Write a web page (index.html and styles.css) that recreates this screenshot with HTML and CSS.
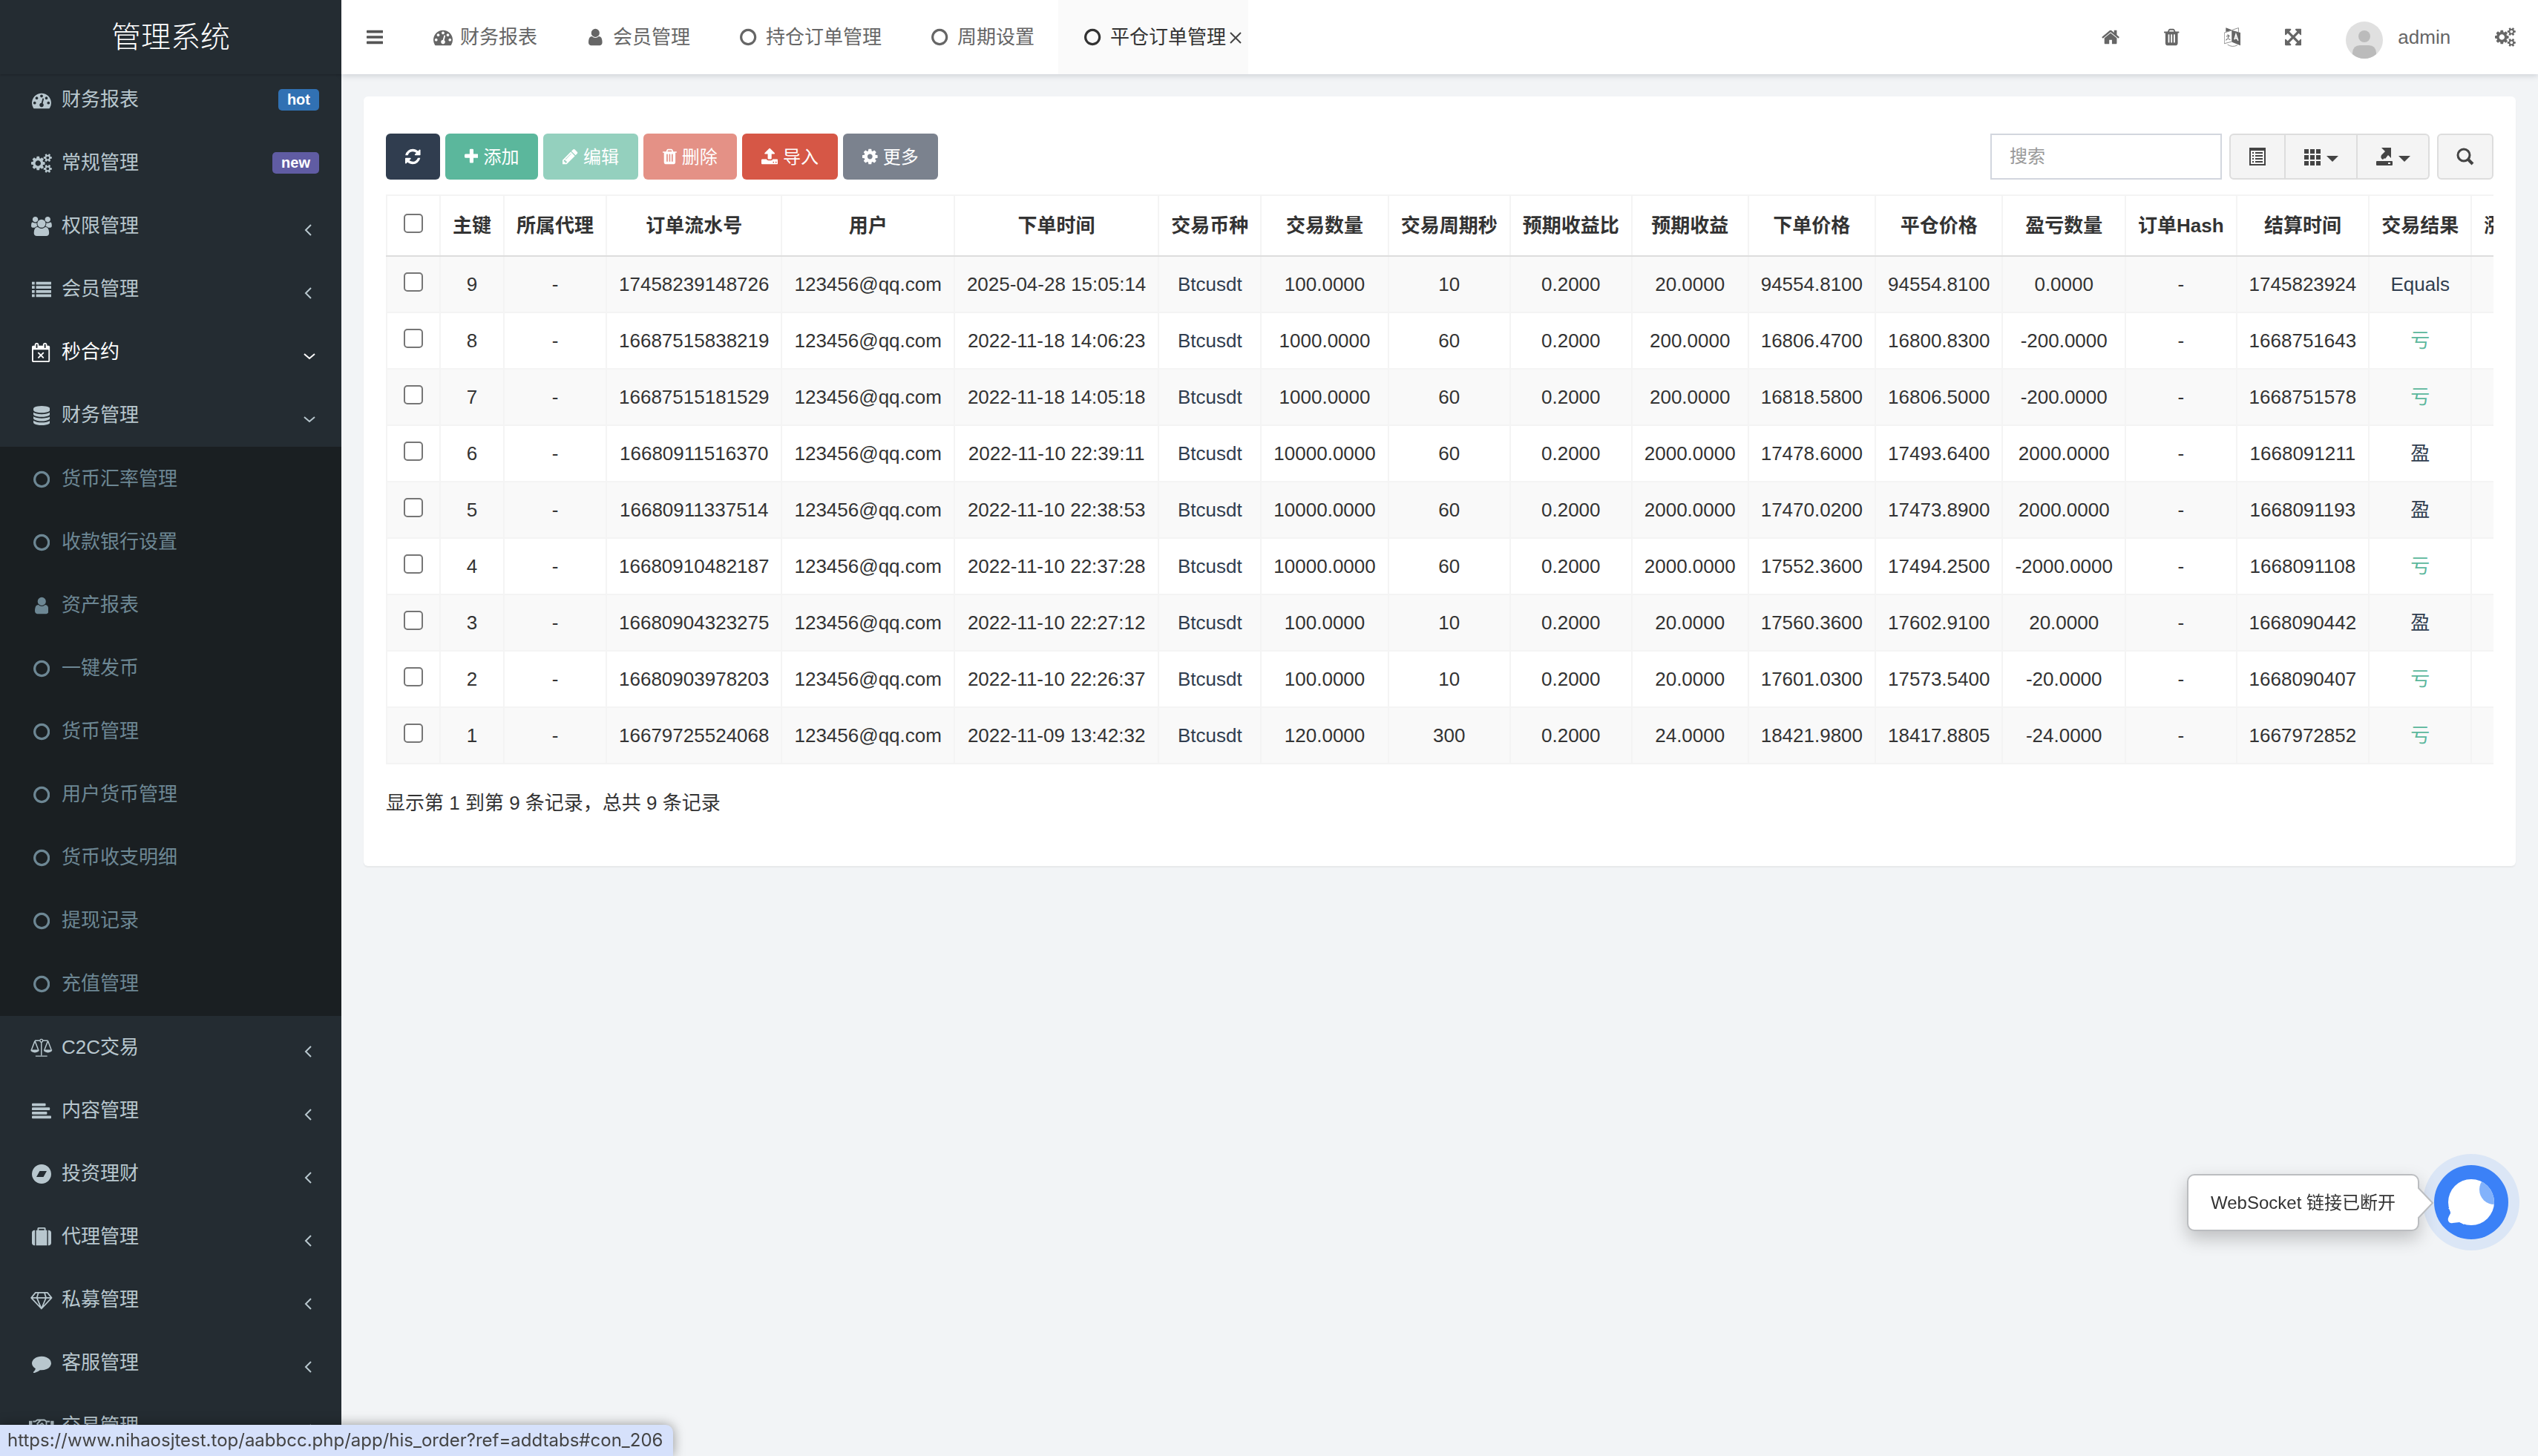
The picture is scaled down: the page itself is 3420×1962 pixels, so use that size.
FILE: index.html
```html
<!DOCTYPE html>
<html lang="zh-CN">
<head>
  <meta charset="UTF-8">
  <title>平仓订单管理</title>
  <link rel="stylesheet" href="styles.css">
</head>
<body>
  <!-- icon shapes, used below with <use> -->
  <svg class="sprite" aria-hidden="true">
    <defs>
      <path id="i-bars" d="M1664 1344v128q0 26-19 45t-45 19h-1408q-26 0-45-19t-19-45v-128q0-26 19-45t45-19h1408q26 0 45 19t19 45zm0-512v128q0 26-19 45t-45 19h-1408q-26 0-45-19t-19-45v-128q0-26 19-45t45-19h1408q26 0 45 19t19 45zm0-512v128q0 26-19 45t-45 19h-1408q-26 0-45-19t-19-45v-128q0-26 19-45t45-19h1408q26 0 45 19t19 45z"/>
      <path id="i-dashboard" d="M384 1152q0-53-37.5-90.5t-90.5-37.5-90.5 37.5-37.5 90.5 37.5 90.5 90.5 37.5 90.5-37.5 37.5-90.5zm192-448q0-53-37.5-90.5t-90.5-37.5-90.5 37.5-37.5 90.5 37.5 90.5 90.5 37.5 90.5-37.5 37.5-90.5zm428 481l101-382q6-26-7.5-48.5t-38.5-29.5-48 6.5-30 39.5l-101 382q-60 5-107 43.5t-63 98.5q-20 77 20 146t117 89 146-20 89-117q16-60-6-117t-72-91zm660-33q0-53-37.5-90.5t-90.5-37.5-90.5 37.5-37.5 90.5 37.5 90.5 90.5 37.5 90.5-37.5 37.5-90.5zm-640-640q0-53-37.5-90.5t-90.5-37.5-90.5 37.5-37.5 90.5 37.5 90.5 90.5 37.5 90.5-37.5 37.5-90.5zm448 192q0-53-37.5-90.5t-90.5-37.5-90.5 37.5-37.5 90.5 37.5 90.5 90.5 37.5 90.5-37.5 37.5-90.5zm320 448q0 261-141 483-19 29-54 29h-1402q-35 0-54-29-141-221-141-483 0-182 71-348t191-286 286-191 348-71 348 71 286 191 191 286 71 348z"/>
      <path id="i-user" d="M1536 1399q0 109-62.5 187t-150.5 78h-854q-88 0-150.5-78t-62.5-187q0-85 8.5-160.5t31.5-152 58.5-131 94-89 134.5-34.5q131 128 313 128t313-128q76 0 134.5 34.5t94 89 58.5 131 31.5 152 8.5 160.5zm-256-887q0 159-112.5 271.5t-271.5 112.5-271.5-112.5-112.5-271.5 112.5-271.5 271.5-112.5 271.5 112.5 112.5 271.5z"/>
      <path id="i-cog" d="M1152 896q0-106-75-181t-181-75-181 75-75 181 75 181 181 75 181-75 75-181zm512-109v222q0 12-8 23t-20 13l-185 28q-19 54-39 91 35 50 107 138 10 12 10 25t-9 23q-27 37-99 108t-94 71q-12 0-26-9l-138-108q-44 23-91 38-16 136-29 186-7 28-36 28h-222q-14 0-24.5-8.5t-11.5-21.5l-28-184q-49-16-90-37l-141 107q-10 9-25 9-14 0-25-11-126-114-165-168-7-10-7-23 0-12 8-23 15-21 51-66.5t54-70.5q-27-50-41-99l-183-27q-13-2-21-12.5t-8-23.5v-222q0-12 8-23t19-13l186-28q14-46 39-92-40-57-107-138-10-12-10-24 0-10 9-23 26-36 98.5-107.5t94.5-71.5q13 0 26 10l138 107q44-23 91-38 16-136 29-186 7-28 36-28h222q14 0 24.5 8.5t11.5 21.5l28 184q49 16 90 37l142-107q9-9 24-9 13 0 25 10 129 119 165 170 7 8 7 22 0 12-8 23-15 21-51 66.5t-54 70.5q26 50 41 98l183 28q13 2 21 12.5t8 23.5z"/>
      <path id="i-cogs" d="M832 896q0-106-75-181t-181-75-181 75-75 181 75 181 181 75 181-75 75-181zm768 512q0-52-38-90t-90-38-90 38-38 90q0 53 37.5 90.5t90.5 37.5 90.5-37.5 37.5-90.5zm0-1024q0-52-38-90t-90-38-90 38-38 90q0 53 37.5 90.5t90.5 37.5 90.5-37.5 37.5-90.5zm-384 421v185q0 10-7 19.5t-16 10.5l-155 24q-11 35-32 76 34 48 90 115 7 11 7 20 0 12-7 19-23 30-82.5 89.5t-78.5 59.5q-11 0-21-7l-115-90q-37 19-77 31-11 108-23 155-7 24-30 24h-186q-11 0-20-7.5t-10-17.5l-23-153q-34-10-75-31l-118 89q-7 7-20 7-11 0-21-8-144-133-144-160 0-9 7-19 10-14 41-53t47-61q-23-44-35-82l-152-24q-10-1-17-9.5t-7-19.5v-185q0-10 7-19.5t16-10.5l155-24q11-35 32-76-34-48-90-115-7-11-7-20 0-12 7-20 22-30 82-89t79-59q11 0 21 7l115 90q34-18 77-32 11-108 23-154 7-24 30-24h186q11 0 20 7.5t10 17.5l23 153q34 10 75 31l118-89q8-7 20-7 11 0 21 8 144 133 144 160 0 8-7 19-12 16-42 54t-45 60q23 48 34 82l152 23q10 2 17 10.5t7 19.5zm640 533v140q0 16-149 31-12 27-30 52 51 113 51 138 0 4-4 7-122 71-124 71-8 0-46-47t-52-68q-20 2-30 2t-30-2q-14 21-52 68t-46 47q-2 0-124-71-4-3-4-7 0-25 51-138-18-25-30-52-149-15-149-31v-140q0-16 149-31 13-29 30-52-51-113-51-138 0-4 4-7 4-2 35-20t59-34 30-16q8 0 46 46.5t52 67.5q20-2 30-2t30 2q51-71 92-112l6-2q4 0 124 70 4 3 4 7 0 25-51 138 17 23 30 52 149 15 149 31zm0-1024v140q0 16-149 31-12 27-30 52 51 113 51 138 0 4-4 7-122 71-124 71-8 0-46-47t-52-68q-20 2-30 2t-30-2q-14 21-52 68t-46 47q-2 0-124-71-4-3-4-7 0-25 51-138-18-25-30-52-149-15-149-31v-140q0-16 149-31 13-29 30-52-51-113-51-138 0-4 4-7 4-2 35-20t59-34 30-16q8 0 46 46.5t52 67.5q20-2 30-2t30 2q51-71 92-112l6-2q4 0 124 70 4 3 4 7 0 25-51 138 17 23 30 52 149 15 149 31z"/>
      <path id="i-users" d="M657 896q-162 5-265 128h-134q-82 0-138-40.5t-56-118.5q0-353 124-353 6 0 43.5 21t97.5 42.5 119 21.5q67 0 133-23-5 37-5 66 0 143 81 256zm1071 637q0 120-73 189.5t-194 69.5h-874q-121 0-194-69.5t-73-189.5q0-53 3.5-103.5t14-109 26.5-108.5 43-97.5 62-81 85.5-53.5 111.5-20q10 0 43 21.5t73 48 107 48 135 21.5 135-21.5 107-48 73-48 43-21.5q61 0 111.5 20t85.5 53.5 62 81 43 97.5 26.5 108.5 14 109 3.5 103.5zm-1024-1277q0 106-75 181t-181 75-181-75-75-181 75-181 181-75 181 75 75 181zm704 384q0 159-112.5 271.5t-271.5 112.5-271.5-112.5-112.5-271.5 112.5-271.5 271.5-112.5 271.5 112.5 112.5 271.5zm576 225q0 78-56 118.5t-138 40.5h-134q-103-123-265-128 81-117 81-256 0-29-5-66 66 23 133 23 59 0 119-21.5t97.5-42.5 43.5-21q124 0 124 353zm-128-609q0 106-75 181t-181 75-181-75-75-181 75-181 181-75 181 75 75 181z"/>
      <path id="i-list" d="M0 192h256v256h-256zM384 192h1408v256h-1408zM0 576h256v256h-256zM384 576h1408v256h-1408zM0 960h256v256h-256zM384 960h1408v256h-1408zM0 1344h256v256h-256zM384 1344h1408v256h-1408z"/>
      <path id="i-calendar" d="M1111 1385l-46 46q-9 9-22 9t-23-9l-188-189-188 189q-10 9-23 9t-22-9l-46-46q-9-9-9-22t9-23l189-188-189-188q-9-10-9-23t9-22l46-46q9-9 22-9t23 9l188 188 188-188q10-9 23-9t22 9l46 46q9 9 9 22t-9 23l-188 188 188 188q9 10 9 23t-9 22zm-983 279h1408v-1024h-1408v1024zm384-1216v-288q0-14-9-23t-23-9h-64q-14 0-23 9t-9 23v288q0 14 9 23t23 9h64q14 0 23-9t9-23zm768 0v-288q0-14-9-23t-23-9h-64q-14 0-23 9t-9 23v288q0 14 9 23t23 9h64q14 0 23-9t9-23zm384-64v1280q0 52-38 90t-90 38h-1408q-52 0-90-38t-38-90v-1280q0-52 38-90t90-38h128v-96q0-66 47-113t113-47h64q66 0 113 47t47 113v96h384v-96q0-66 47-113t113-47h64q66 0 113 47t47 113v96h128q52 0 90 38t38 90z" fill-rule="evenodd"/>
      <path id="i-database" d="M896 768q237 0 443-43t325-127v170q0 69-103 128t-280 93.5-385 34.5-385-34.5-280-93.5-103-128v-170q119 84 325 127t443 43zm0 768q237 0 443-43t325-127v170q0 69-103 128t-280 93.5-385 34.5-385-34.5-280-93.5-103-128v-170q119 84 325 127t443 43zm0-384q237 0 443-43t325-127v170q0 69-103 128t-280 93.5-385 34.5-385-34.5-280-93.5-103-128v-170q119 84 325 127t443 43zm0-1152q208 0 385 34.5t280 93.5 103 128v128q0 69-103 128t-280 93.5-385 34.5-385-34.5-280-93.5-103-128v-128q0-69 103-128t280-93.5 385-34.5z"/>
      <path id="i-circle" d="M896 352q-148 0-273 73t-198 198-73 273 73 273 198 198 273 73 273-73 198-198 73-273-73-273-198-198-273-73zm768 544q0 209-103 385.5t-279.5 279.5-385.5 103-385.5-103-279.5-279.5-103-385.5 103-385.5 279.5-279.5 385.5-103 385.5 103 279.5 279.5 103 385.5z"/>
      <g id="i-balance">
        <path d="M1024 380v1220M420 230h460M1168 230h460M480 1664h1088M420 250L100 1080M420 250l320 830M1628 250l-320 830M1628 250l320 830" fill="none" stroke="currentColor" stroke-width="100"/>
        <circle cx="1024" cy="230" r="130" fill="none" stroke="currentColor" stroke-width="90"/>
        <path d="M20 1060h800q0 130-120 205t-280 75-280-75-120-205zM1228 1060h800q0 130-120 205t-280 75-280-75-120-205z"/>
      </g>
      <g id="i-align">
        <rect y="192" width="1280" height="256" rx="64"/>
        <rect y="576" width="1664" height="256" rx="64"/>
        <rect y="960" width="1408" height="256" rx="64"/>
        <rect y="1344" width="1792" height="256" rx="64"/>
      </g>
      <path id="i-bandcamp" d="M1070 1178l306-564h-654l-306 564h654zm722-282q0 182-71 348t-191 286-286 191-348 71-348-71-286-191-191-286-71-348 71-348 191-286 286-191 348-71 348 71 286 191 191 286 71 348z" fill-rule="evenodd"/>
      <path id="i-suitcase" d="M640 256h512v-128h-512v128zm-352 0v1408h-64q-92 0-158-66t-66-158v-960q0-92 66-158t158-66h64zm1120 0v1408h-1024v-1408h128v-160q0-40 28-68t68-28h576q40 0 68 28t28 68v160h128zm384 224v960q0 92-66 158t-158 66h-64v-1408h64q92 0 158 66t66 158z"/>
      <path id="i-diamond" d="M470 200h1108l390 480-944 1010L80 680zM80 680h1888M740 200L600 680l424 1010 424-1010-140-480" fill="none" stroke="currentColor" stroke-width="120" stroke-linejoin="round"/>
      <path id="i-comment" d="M1792 896q0 174-120 321.5t-326 233-450 85.5q-70 0-145-8-198 175-460 242-49 14-114 22-17 2-30.5-9t-17.5-29v-1q-3-4-.5-12t2-10 4.5-9.5l6-9 7-8.5 8-9q7-8 31-34.5t34.5-38 31-39.5 32.5-51 27-59 26-76q-157-89-247.5-220t-90.5-281q0-130 71-248.5t191-204.5 286-136.5 348-50.5q244 0 450 85.5t326 233 120 321.5z"/>
      <g id="i-handshake" fill="none" stroke="currentColor" stroke-width="130" stroke-linejoin="round">
        <path d="M370 450h220l180-140h330l-330 360q60 180 260 100l180-160 520 530q60 160-130 170-60 170-250 130-130 150-280 20l-260-40-270-310H370M1100 310h340l180 140h320M1620 450v690h320"/>
        <path d="M0 400h300v800H0zM2010 400h300v800h-300z" fill="currentColor" stroke="none"/>
      </g>
      <path id="i-home" d="M1472 992v480q0 26-19 45t-45 19h-384v-384h-256v384h-384q-26 0-45-19t-19-45v-480q0-1 .5-3t.5-3l575-474 575 474q1 2 1 6zm223-69l-62 74q-8 9-21 11h-3q-13 0-21-7l-692-577-692 577q-12 8-24 7-13-2-21-11l-62-74q-8-10-7-23.5t11-21.5l719-599q32-26 76-26t76 26l244 204v-195q0-14 9-23t23-9h192q14 0 23 9t9 23v408l219 182q10 8 11 21.5t-7 23.5z"/>
      <path id="i-trash" d="M704 1376v-704q0-14-9-23t-23-9h-64q-14 0-23 9t-9 23v704q0 14 9 23t23 9h64q14 0 23-9t9-23zm256 0v-704q0-14-9-23t-23-9h-64q-14 0-23 9t-9 23v704q0 14 9 23t23 9h64q14 0 23-9t9-23zm256 0v-704q0-14-9-23t-23-9h-64q-14 0-23 9t-9 23v704q0 14 9 23t23 9h64q14 0 23-9t9-23zm-544-992h448l-48-117q-7-9-17-11h-317q-10 2-17 11zm928 32v64q0 14-9 23t-23 9h-96v948q0 83-47 143.5t-113 60.5h-832q-66 0-113-58.5t-47-141.5v-952h-96q-14 0-23-9t-9-23v-64q0-14 9-23t23-9h309l70-167q15-37 54-63t79-26h320q40 0 79 26t54 63l70 167h309q14 0 23 9t9 23z"/>
      <g id="i-language" fill="none" stroke="currentColor">
        <path d="M20 490l710-220v1040L20 1500zM760 230L1340 40v390" stroke-width="50"/>
        <path d="M161 20l590 215-590 180zM736 253l782 230v1197l-782-323z" fill="currentColor" stroke="none"/>
        <path d="M330 640l60 110M200 830l330-80M470 770q-80 280-310 430M330 930q100 180 250 210" stroke-width="70"/>
        <path d="M960 1120l140-480 200 580M1000 980l230 60" stroke="#fff" stroke-width="110"/>
        <path d="M320 1590q440 300 920 50" stroke-width="50"/>
      </g>
      <path id="i-arrows" d="M1411 541l-355 355 355 355 144-144q29-31 70-14 39 17 39 59v448q0 26-19 45t-45 19h-448q-42 0-59-40-17-39 14-69l144-144-355-355-355 355 144 144q31 30 14 69-17 40-59 40h-448q-26 0-45-19t-19-45v-448q0-42 40-59 39-17 69 14l144 144 355-355-355-355-144 144q-19 19-45 19-12 0-24-5-40-17-40-59v-448q0-26 19-45t45-19h448q42 0 59 40 17 39-14 69l-144 144 355 355 355-355-144-144q-31-30-14-69 17-40 59-40h448q26 0 45 19t19 45v448q0 42-39 59-13 5-25 5-26 0-45-19z"/>
      <path id="i-refresh" d="M1639 1056q0 5-1 7-64 268-268 434.5t-478 166.5q-146 0-282.5-55t-243.5-157l-129 129q-19 19-45 19t-45-19-19-45v-448q0-26 19-45t45-19h448q26 0 45 19t19 45-19 45l-137 137q71 66 161 102t187 36q134 0 250-65t186-179q11-17 53-117 8-23 30-23h192q13 0 22.5 9.5t9.5 22.5zm25-800v448q0 26-19 45t-45 19h-448q-26 0-45-19t-19-45 19-45l138-138q-148-137-349-137-134 0-250 65t-186 179q-11 17-53 117-8 23-30 23h-199q-13 0-22.5-9.5t-9.5-22.5v-7q65-268 270-434.5t480-166.5q146 0 284 55.5t245 156.5l130-129q19-19 45-19t45 19 19 45z"/>
      <path id="i-plus" d="M1600 736v192q0 40-28 68t-68 28h-416v416q0 40-28 68t-68 28h-192q-40 0-68-28t-28-68v-416h-416q-40 0-68-28t-28-68v-192q0-40 28-68t68-28h416v-416q0-40 28-68t68-28h192q40 0 68 28t28 68v416h416q40 0 68 28t28 68z"/>
      <path id="i-pencil" d="M491 1536l91-91-235-235-91 91v107h128v128h107zm523-928q0-22-22-22-10 0-17 7l-542 542q-7 7-7 17 0 22 22 22 10 0 17-7l542-542q7-7 7-17zm-54-192l416 416-832 832h-416v-416zm683 96q0 53-37 90l-166 166-416-416 166-165q36-38 90-38 53 0 91 38l235 234q37 39 37 91z"/>
      <path id="i-upload" d="M1344 1472q0-26-19-45t-45-19-45 19-19 45 19 45 45 19 45-19 19-45zm256 0q0-26-19-45t-45-19-45 19-19 45 19 45 45 19 45-19 19-45zm128-224v320q0 40-28 68t-68 28h-1472q-40 0-68-28t-28-68v-320q0-40 28-68t68-28h427q21 56 70.5 92t110.5 36h256q61 0 110.5-36t70.5-92h427q40 0 68 28t28 68zm-325-648q-17 40-59 40h-256v448q0 26-19 45t-45 19h-256q-26 0-45-19t-19-45v-448h-256q-42 0-59-40-17-39 14-69l448-448q18-19 45-19t45 19l448 448q31 30 14 69z"/>
      <path id="i-left" d="M12 3L5 10l7 7" fill="none" stroke="currentColor" stroke-width="2"/>
      <path id="i-down" d="M3 7l7 6 7-6" fill="none" stroke="currentColor" stroke-width="2"/>
    </defs>
  </svg>

  <div class="layout">
    <aside class="sidebar">
      <a class="logo" href="#">管理系统</a>
      <ul class="menu">
        <li><a href="#"><span class="menu-icon"><svg class="icon" viewBox="0 0 1792 1792"><use href="#i-dashboard"/></svg></span>财务报表<small class="badge badge-blue">hot</small></a></li>
        <li><a href="#"><span class="menu-icon"><svg class="icon" viewBox="-64 0 1920 1792"><use href="#i-cogs"/></svg></span>常规管理<small class="badge badge-purple">new</small></a></li>
        <li><a href="#"><span class="menu-icon"><svg class="icon" viewBox="64 0 1920 1792"><use href="#i-users"/></svg></span>权限管理<svg class="chevron" viewBox="0 0 20 20"><use href="#i-left"/></svg></a></li>
        <li><a href="#"><span class="menu-icon"><svg class="icon" viewBox="0 0 1792 1792"><use href="#i-list"/></svg></span>会员管理<svg class="chevron" viewBox="0 0 20 20"><use href="#i-left"/></svg></a></li>
        <li><a class="current" href="#"><span class="menu-icon"><svg class="icon" viewBox="0 0 1792 1792"><use href="#i-calendar"/></svg></span>秒合约<svg class="chevron" viewBox="0 0 20 20"><use href="#i-down"/></svg></a></li>
        <li>
          <a href="#"><span class="menu-icon"><svg class="icon" viewBox="128 0 1536 1792"><use href="#i-database"/></svg></span>财务管理<svg class="chevron" viewBox="0 0 20 20"><use href="#i-down"/></svg></a>
          <ul class="submenu">
            <li><a href="#"><span class="menu-icon"><svg class="icon" viewBox="128 0 1536 1792"><use href="#i-circle"/></svg></span>货币汇率管理</a></li>
            <li><a href="#"><span class="menu-icon"><svg class="icon" viewBox="128 0 1536 1792"><use href="#i-circle"/></svg></span>收款银行设置</a></li>
            <li><a href="#"><span class="menu-icon"><svg class="icon" viewBox="256 0 1280 1792"><use href="#i-user"/></svg></span>资产报表</a></li>
            <li><a href="#"><span class="menu-icon"><svg class="icon" viewBox="128 0 1536 1792"><use href="#i-circle"/></svg></span>一键发币</a></li>
            <li><a href="#"><span class="menu-icon"><svg class="icon" viewBox="128 0 1536 1792"><use href="#i-circle"/></svg></span>货币管理</a></li>
            <li><a href="#"><span class="menu-icon"><svg class="icon" viewBox="128 0 1536 1792"><use href="#i-circle"/></svg></span>用户货币管理</a></li>
            <li><a href="#"><span class="menu-icon"><svg class="icon" viewBox="128 0 1536 1792"><use href="#i-circle"/></svg></span>货币收支明细</a></li>
            <li><a href="#"><span class="menu-icon"><svg class="icon" viewBox="128 0 1536 1792"><use href="#i-circle"/></svg></span>提现记录</a></li>
            <li><a href="#"><span class="menu-icon"><svg class="icon" viewBox="128 0 1536 1792"><use href="#i-circle"/></svg></span>充值管理</a></li>
          </ul>
        </li>
        <li><a href="#"><span class="menu-icon"><svg class="icon" viewBox="-64 0 2176 1792"><use href="#i-balance"/></svg></span>C2C交易<svg class="chevron" viewBox="0 0 20 20"><use href="#i-left"/></svg></a></li>
        <li><a href="#"><span class="menu-icon"><svg class="icon" viewBox="0 0 1792 1792"><use href="#i-align"/></svg></span>内容管理<svg class="chevron" viewBox="0 0 20 20"><use href="#i-left"/></svg></a></li>
        <li><a href="#"><span class="menu-icon"><svg class="icon" viewBox="0 0 1792 1792"><use href="#i-bandcamp"/></svg></span>投资理财<svg class="chevron" viewBox="0 0 20 20"><use href="#i-left"/></svg></a></li>
        <li><a href="#"><span class="menu-icon"><svg class="icon" viewBox="0 0 1792 1792"><use href="#i-suitcase"/></svg></span>代理管理<svg class="chevron" viewBox="0 0 20 20"><use href="#i-left"/></svg></a></li>
        <li><a href="#"><span class="menu-icon"><svg class="icon" viewBox="0 0 2048 1792"><use href="#i-diamond"/></svg></span>私募管理<svg class="chevron" viewBox="0 0 20 20"><use href="#i-left"/></svg></a></li>
        <li><a href="#"><span class="menu-icon"><svg class="icon" viewBox="0 0 1792 1792"><use href="#i-comment"/></svg></span>客服管理<svg class="chevron" viewBox="0 0 20 20"><use href="#i-left"/></svg></a></li>
        <li><a href="#"><span class="menu-icon"><svg class="icon" viewBox="0 0 2304 1792"><use href="#i-handshake"/></svg></span>交易管理<svg class="chevron" viewBox="0 0 20 20"><use href="#i-left"/></svg></a></li>
      </ul>
    </aside>

    <div class="main">
      <header class="header">
        <button class="toggle" type="button" aria-label="切换菜单"><svg class="icon" viewBox="128 0 1536 1792"><use href="#i-bars"/></svg></button>
        <nav class="tabs">
          <a class="tab" href="#"><span class="tab-icon"><svg class="icon" viewBox="0 0 1792 1792"><use href="#i-dashboard"/></svg></span>财务报表</a>
          <a class="tab" href="#"><span class="tab-icon"><svg class="icon" viewBox="256 0 1280 1792"><use href="#i-user"/></svg></span>会员管理</a>
          <a class="tab" href="#"><span class="tab-icon"><svg class="icon" viewBox="128 0 1536 1792"><use href="#i-circle"/></svg></span>持仓订单管理</a>
          <a class="tab" href="#"><span class="tab-icon"><svg class="icon" viewBox="128 0 1536 1792"><use href="#i-circle"/></svg></span>周期设置</a>
          <div class="tab-wrap">
            <a class="tab active" href="#"><span class="tab-icon"><svg class="icon" viewBox="128 0 1536 1792"><use href="#i-circle"/></svg></span>平仓订单管理</a>
            <button class="tab-close" type="button" aria-label="关闭"><svg viewBox="0 0 16 16"><path d="M1 1l14 14M15 1L1 15" stroke="currentColor" stroke-width="2"/></svg></button>
          </div>
        </nav>
        <nav class="tools">
          <a href="#" aria-label="首页"><svg class="icon" viewBox="64 0 1664 1792"><use href="#i-home"/></svg></a>
          <a href="#" aria-label="清除缓存"><svg class="icon" viewBox="192 0 1408 1792"><use href="#i-trash"/></svg></a>
          <a href="#" aria-label="语言"><svg class="icon" viewBox="0 0 1536 1792"><use href="#i-language"/></svg></a>
          <a href="#" aria-label="全屏"><svg class="icon" viewBox="128 0 1536 1792"><use href="#i-arrows"/></svg></a>
          <a class="account" href="#">
            <svg class="avatar" viewBox="0 0 50 50">
              <circle cx="25" cy="25" r="25" fill="#e0e0e0"/>
              <circle cx="25" cy="20" r="8" fill="#bbb"/>
              <path d="M9 44v-2q1-10 10-10h12q9 0 10 10v2q-7 6-16 6T9 44z" fill="#bbb"/>
            </svg>admin</a>
          <a href="#" aria-label="设置"><svg class="icon" viewBox="-64 0 1920 1792"><use href="#i-cogs"/></svg></a>
        </nav>
      </header>

      <main class="panel">
        <div class="toolbar">
          <button class="btn btn-dark" type="button" aria-label="刷新"><svg class="icon" viewBox="128 0 1536 1792"><use href="#i-refresh"/></svg></button>
          <button class="btn btn-green" type="button"><svg class="icon" viewBox="192 0 1408 1792"><use href="#i-plus"/></svg>添加</button>
          <button class="btn btn-green" type="button" disabled><svg class="icon" viewBox="128 0 1536 1792"><use href="#i-pencil"/></svg>编辑</button>
          <button class="btn btn-red" type="button" disabled><svg class="icon" viewBox="192 0 1408 1792"><use href="#i-trash"/></svg>删除</button>
          <button class="btn btn-red" type="button"><svg class="icon" viewBox="64 0 1664 1792"><use href="#i-upload"/></svg>导入</button>
          <button class="btn btn-gray" type="button"><svg class="icon" viewBox="128 0 1536 1792"><use href="#i-cog"/></svg>更多</button>
          <div class="filters">
            <input class="search" type="text" placeholder="搜索" aria-label="搜索">
            <div class="btn-group">
              <button class="btn btn-default" type="button" aria-label="切换视图">
                <svg class="glyph" viewBox="0 0 24 24"><path d="M1 0h22v24H1zM3 4v18h18V4z" fill-rule="evenodd"/><path d="M5 7h2M9 7h10M5 11h2M9 11h10M5 15h2M9 15h10M5 19h2M9 19h10" stroke="currentColor" stroke-width="2"/></svg>
              </button>
              <button class="btn btn-default" type="button" aria-label="显示列">
                <svg class="glyph" viewBox="0 0 24 24"><path d="M1 2h6v6H1zM9 2h6v6H9zM17 2h6v6h-6zM1 10h6v6H1zM9 10h6v6H9zM17 10h6v6h-6zM1 18h6v6H1zM9 18h6v6H9zM17 18h6v6h-6z"/></svg><span class="caret"></span>
              </button>
              <button class="btn btn-default" type="button" aria-label="导出">
                <svg class="glyph" viewBox="0 0 24 24"><path d="M8 0h13v14l-4-4-4 5-5-5 5-5zM8 10l4 4-2 2q-4-2-2-6zM2 18h20q1 0 1 1v4q0 1-1 1H2q-1 0-1-1v-4q0-1 1-1zM17 20v2h3v-2z" fill-rule="evenodd"/></svg><span class="caret"></span>
              </button>
            </div>
            <button class="btn btn-default" type="button" aria-label="高级搜索">
              <svg class="glyph" viewBox="0 0 24 24"><circle cx="10" cy="10" r="8" fill="none" stroke="currentColor" stroke-width="3"/><path d="M15 15l7 7" stroke="currentColor" stroke-width="4"/></svg>
            </button>
          </div>
        </div>

        <div class="table-wrap">
          <table class="orders">
            <thead>
              <tr>
                <th class="check"><input type="checkbox" aria-label="全选"></th>
                <th>主键</th><th>所属代理</th><th>订单流水号</th><th>用户</th><th>下单时间</th><th>交易币种</th><th>交易数量</th><th>交易周期秒</th><th>预期收益比</th><th>预期收益</th><th>下单价格</th><th>平仓价格</th><th>盈亏数量</th><th>订单Hash</th><th>结算时间</th><th>交易结果</th><th>涨跌</th>
              </tr>
            </thead>
            <tbody>
              <tr>
                <td class="check"><input type="checkbox" aria-label="选择 9"></td>
                <td>9</td><td>-</td><td>17458239148726</td><td>123456@qq.com</td><td>2025-04-28 15:05:14</td><td><a href="#">Btcusdt</a></td><td>100.0000</td><td>10</td><td>0.2000</td><td>20.0000</td><td>94554.8100</td><td>94554.8100</td><td>0.0000</td><td>-</td><td>1745823924</td><td><a href="#">Equals</a></td><td></td>
              </tr>
              <tr>
                <td class="check"><input type="checkbox" aria-label="选择 8"></td>
                <td>8</td><td>-</td><td>16687515838219</td><td>123456@qq.com</td><td>2022-11-18 14:06:23</td><td><a href="#">Btcusdt</a></td><td>1000.0000</td><td>60</td><td>0.2000</td><td>200.0000</td><td>16806.4700</td><td>16800.8300</td><td>-200.0000</td><td>-</td><td>1668751643</td><td><a class="loss" href="#">亏</a></td><td></td>
              </tr>
              <tr>
                <td class="check"><input type="checkbox" aria-label="选择 7"></td>
                <td>7</td><td>-</td><td>16687515181529</td><td>123456@qq.com</td><td>2022-11-18 14:05:18</td><td><a href="#">Btcusdt</a></td><td>1000.0000</td><td>60</td><td>0.2000</td><td>200.0000</td><td>16818.5800</td><td>16806.5000</td><td>-200.0000</td><td>-</td><td>1668751578</td><td><a class="loss" href="#">亏</a></td><td></td>
              </tr>
              <tr>
                <td class="check"><input type="checkbox" aria-label="选择 6"></td>
                <td>6</td><td>-</td><td>16680911516370</td><td>123456@qq.com</td><td>2022-11-10 22:39:11</td><td><a href="#">Btcusdt</a></td><td>10000.0000</td><td>60</td><td>0.2000</td><td>2000.0000</td><td>17478.6000</td><td>17493.6400</td><td>2000.0000</td><td>-</td><td>1668091211</td><td><a href="#">盈</a></td><td></td>
              </tr>
              <tr>
                <td class="check"><input type="checkbox" aria-label="选择 5"></td>
                <td>5</td><td>-</td><td>16680911337514</td><td>123456@qq.com</td><td>2022-11-10 22:38:53</td><td><a href="#">Btcusdt</a></td><td>10000.0000</td><td>60</td><td>0.2000</td><td>2000.0000</td><td>17470.0200</td><td>17473.8900</td><td>2000.0000</td><td>-</td><td>1668091193</td><td><a href="#">盈</a></td><td></td>
              </tr>
              <tr>
                <td class="check"><input type="checkbox" aria-label="选择 4"></td>
                <td>4</td><td>-</td><td>16680910482187</td><td>123456@qq.com</td><td>2022-11-10 22:37:28</td><td><a href="#">Btcusdt</a></td><td>10000.0000</td><td>60</td><td>0.2000</td><td>2000.0000</td><td>17552.3600</td><td>17494.2500</td><td>-2000.0000</td><td>-</td><td>1668091108</td><td><a class="loss" href="#">亏</a></td><td></td>
              </tr>
              <tr>
                <td class="check"><input type="checkbox" aria-label="选择 3"></td>
                <td>3</td><td>-</td><td>16680904323275</td><td>123456@qq.com</td><td>2022-11-10 22:27:12</td><td><a href="#">Btcusdt</a></td><td>100.0000</td><td>10</td><td>0.2000</td><td>20.0000</td><td>17560.3600</td><td>17602.9100</td><td>20.0000</td><td>-</td><td>1668090442</td><td><a href="#">盈</a></td><td></td>
              </tr>
              <tr>
                <td class="check"><input type="checkbox" aria-label="选择 2"></td>
                <td>2</td><td>-</td><td>16680903978203</td><td>123456@qq.com</td><td>2022-11-10 22:26:37</td><td><a href="#">Btcusdt</a></td><td>100.0000</td><td>10</td><td>0.2000</td><td>20.0000</td><td>17601.0300</td><td>17573.5400</td><td>-20.0000</td><td>-</td><td>1668090407</td><td><a class="loss" href="#">亏</a></td><td></td>
              </tr>
              <tr>
                <td class="check"><input type="checkbox" aria-label="选择 1"></td>
                <td>1</td><td>-</td><td>16679725524068</td><td>123456@qq.com</td><td>2022-11-09 13:42:32</td><td><a href="#">Btcusdt</a></td><td>120.0000</td><td>300</td><td>0.2000</td><td>24.0000</td><td>18421.9800</td><td>18417.8805</td><td>-24.0000</td><td>-</td><td>1667972852</td><td><a class="loss" href="#">亏</a></td><td></td>
              </tr>
            </tbody>
          </table>
        </div>
        <p class="summary">显示第 1 到第 9 条记录，总共 9 条记录</p>
      </main>
    </div>
  </div>

  <div class="chat">
    <div class="chat-tip">WebSocket 链接已断开<svg class="chat-arrow" viewBox="0 0 22 44"><path d="M0 1l20 21L0 43" fill="#fff" stroke="#bbbdc0" stroke-width="2"/></svg></div>
    <button class="chat-btn" type="button" aria-label="客服">
      <svg viewBox="0 0 100 100">
        <clipPath id="bubble"><circle cx="50" cy="50" r="31"/></clipPath>
        <circle cx="50" cy="50" r="31" fill="#fff"/>
        <path d="M19 58q5 4 2 9-3 5-2 8 2 4 6 3l9-1q3 1 6 3L55 60z" fill="#fff"/>
        <circle cx="81" cy="33" r="20" fill="#82b2fb" clip-path="url(#bubble)"/>
      </svg>
    </button>
  </div>

  <div class="status">https://www.nihaosjtest.top/aabbcc.php/app/his_order?ref=addtabs#con_206</div>
</body>
</html>
```
FILE: styles.css
```css
* {
  box-sizing: border-box;
}

body {
  margin: 0;
  font-family: "Liberation Sans", "Noto Sans CJK SC", sans-serif;
  font-size: 26px;
  line-height: 37px;
  color: #333;
  background: #f2f4f6;
  overflow: hidden;
}

a {
  color: inherit;
  text-decoration: none;
}

button,
input {
  font: inherit;
}

button {
  cursor: pointer;
}

.sprite {
  position: absolute;
  width: 0;
  height: 0;
}

.icon {
  display: block;
  height: 1em;
  flex: none;
  fill: currentColor;
}

.layout {
  display: flex;
  height: 100vh;
}

/* sidebar */
.sidebar {
  flex: none;
  width: 460px;
  overflow: hidden;
  background: #242c32;
  color: #b8c7ce;
}

.logo {
  position: relative;
  display: block;
  height: 100px;
  line-height: 100px;
  background: #242c32;
  color: #fff;
  font-family: "Liberation Sans", "Noto Sans CJK SC Light", "Noto Sans CJK SC", sans-serif;
  font-size: 40px;
  font-weight: 300;
  text-align: center;
  box-shadow: 0 1px 3px rgba(0, 0, 0, .2);
}

.menu,
.submenu {
  margin: 0;
  padding: 0;
  list-style: none;
}

/* list is scrolled a little under the logo */
.menu {
  margin-top: -8px;
}

.menu a {
  display: flex;
  align-items: center;
  padding: 24px 30px 24px 36px;
}

.menu a.current {
  color: #fff;
}

.menu-icon {
  display: flex;
  justify-content: center;
  width: 40px;
  margin-right: 7px;
}

.chevron {
  width: 20px;
  height: 20px;
  margin: 10px 3px 0 auto;
}

.badge {
  margin-left: auto;
  padding: 0 12px;
  border-radius: 5px;
  color: #fff;
  font-size: 20px;
  font-weight: bold;
  line-height: 29px;
}

.badge-blue {
  background: #3171b3;
}

.badge-purple {
  background: #605ca3;
}

.submenu {
  padding: 1px 0;
  background: #1a1f22;
  color: #6d8794;
}

/* header */
.main {
  flex: 1;
  min-width: 0;
}

.header {
  display: flex;
  height: 100px;
  background: #fff;
  color: #666;
  box-shadow: 0 2px 8px rgba(0, 21, 41, .16);
}

.toggle {
  width: 90px;
  padding: 0 34px;
  border: 0;
  background: none;
  color: #555;
}

.tabs {
  display: flex;
  gap: 2px;
}

.tab {
  display: flex;
  align-items: center;
  height: 100px;
  padding: 0 30px;
  white-space: nowrap;
}

.tab-icon {
  display: flex;
  justify-content: center;
  width: 33px;
  margin-right: 7px;
}

.tab-wrap {
  position: relative;
  background: #fafafa;
}

.tab.active {
  color: #333;
}

.tab-close {
  position: absolute;
  top: 43px;
  right: 9px;
  width: 16px;
  height: 16px;
  padding: 0;
  border: 0;
  background: none;
  color: #444;
}

.tab-close svg {
  display: block;
}

.tools {
  display: flex;
  margin-left: auto;
}

.tools a {
  display: flex;
  align-items: center;
  height: 100px;
  padding: 0 30px;
}

.avatar {
  width: 50px;
  height: 50px;
  margin: 8px 20px 0 0;
}

/* content */
.panel {
  margin: 30px;
  padding: 50px 30px 66px;
  border-radius: 6px;
  background: #fff;
  box-shadow: 0 2px 2px rgba(0, 0, 0, .05);
}

.toolbar {
  display: flex;
  gap: 7px;
  margin-bottom: 20px;
}

.btn {
  display: flex;
  align-items: center;
  gap: 7px;
  height: 62px;
  padding: 0 26px;
  border: 0;
  border-radius: 6px;
  color: #fff;
  font-size: 24px;
  white-space: nowrap;
}

.btn:disabled {
  opacity: .65;
}

.btn-dark {
  background: #303d4f;
}

.btn-green {
  background: #5bb79c;
}

.btn-red {
  background: #d65746;
}

.btn-gray {
  background: #7b828e;
}

.btn-default {
  padding: 0 24px;
  border: 2px solid #ddd;
  background: #f4f4f4;
  color: #444;
}

.filters {
  display: flex;
  gap: 10px;
  margin-left: auto;
}

.search {
  width: 312px;
  height: 62px;
  padding: 0 24px;
  border: 2px solid #d2d6de;
  border-radius: 0;
  background: #fff;
  font-size: 24px;
}

.search::placeholder {
  color: #999;
}

.btn-group {
  display: flex;
}

.btn-group .btn {
  border-radius: 0;
}

.btn-group .btn:first-child {
  border-radius: 6px 0 0 6px;
}

.btn-group .btn:last-child {
  border-radius: 0 6px 6px 0;
}

.btn-group .btn + .btn {
  border-left: 0;
}

.glyph {
  width: 24px;
  height: 24px;
  fill: currentColor;
}

.caret {
  margin-top: 6px;
  border-top: 8px solid;
  border-right: 8px solid transparent;
  border-left: 8px solid transparent;
}

.table-wrap {
  overflow: hidden;
}

.orders {
  width: max-content;
  border-collapse: collapse;
  text-align: center;
  white-space: nowrap;
}

.orders th,
.orders td {
  height: 76px;
  padding: 0 16px;
  border: 2px solid #f4f4f4;
}

.orders th {
  height: 82px;
  border-bottom-color: #ddd;
}

.orders tbody tr:nth-child(odd) {
  background: #f9f9f9;
}

.orders a {
  color: #303d4f;
}

.orders a.loss {
  color: #5bb79c;
}

.orders .check {
  padding: 0 22px 6px;
}

.orders input {
  display: block;
  appearance: none;
  width: 26px;
  height: 26px;
  margin: 0;
  border: 2px solid #767676;
  border-radius: 5px;
  background: #fff;
}

.summary {
  margin: 34px 0 0;
}

/* chat button */
.chat {
  position: fixed;
  right: 40px;
  bottom: 292px;
  display: flex;
  align-items: center;
  gap: 20px;
}

.chat-tip {
  position: relative;
  padding: 18px 30px;
  border: 2px solid #bbbdc0;
  border-radius: 10px;
  background: #fff;
  font-size: 24px;
  box-shadow: 0 10px 24px rgba(0, 0, 0, .22);
  z-index: 1;
}

.chat-arrow {
  position: absolute;
  top: 15px;
  right: -22px;
  width: 22px;
  height: 44px;
}

.chat-btn {
  width: 100px;
  height: 100px;
  padding: 0;
  border: 0;
  border-radius: 50%;
  background: #3b81f7;
  box-shadow: 0 0 0 15px rgba(59, 130, 247, .12);
}

.chat-btn svg {
  display: block;
}

/* link preview in the bottom corner */
.status {
  position: fixed;
  bottom: 0;
  left: 0;
  padding: 0 14px 0 10px;
  border-radius: 0 10px 0 0;
  background: #d6e1fb;
  color: #444;
  font-family: Inter, sans-serif;
  font-size: 24px;
  line-height: 42px;
  box-shadow: 0 0 16px rgba(0, 0, 0, .4);
}
```
